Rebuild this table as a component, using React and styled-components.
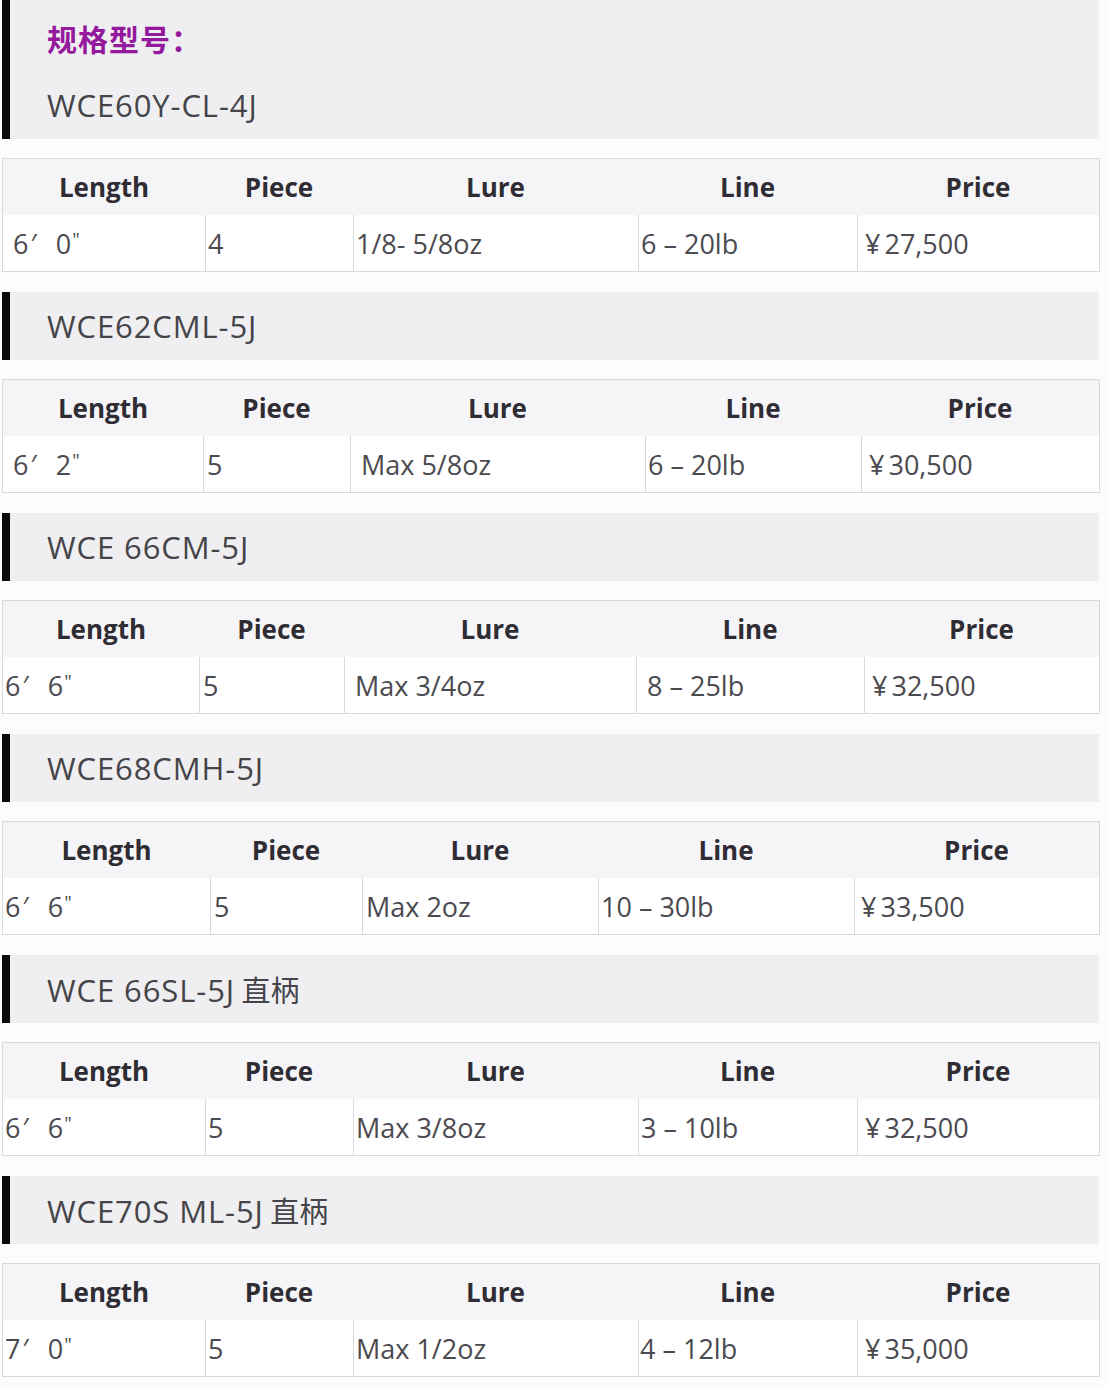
import styled, { createGlobalStyle } from 'styled-components';

const GlobalStyle = createGlobalStyle`
  body {
    margin: 0;
    background: #fcfcfd;
    font-family: "Open Sans", "Noto Sans", "Noto Sans CJK SC", sans-serif;
  }
`;

const Page = styled.div`
  width: 1108px;
  padding: 0 9px 0 2px;
  box-sizing: border-box;
  display: flex;
  flex-direction: column;
`;

const Heading = styled.div`
  background: #efeff1;
  border-left: 8px solid #0a0a0a;
  padding-left: 37px;
  margin-bottom: 19px;
  display: flex;
  flex-direction: column;
  padding-top: ${p => (p.$first ? '14px' : '0')};
`;

const Title = styled.div`
  color: #94199c;
  font-family: "Noto Sans CJK SC", sans-serif;
  font-weight: 700;
  font-size: 30px;
  line-height: 48px;
  height: 57px;
  letter-spacing: 1px;
`;

const Model = styled.div`
  color: #454449;
  font-size: 31px;
  line-height: 68px;
  height: 68px;
  letter-spacing: 0.9px;

  .cjk {
    font-family: "Noto Sans CJK SC", sans-serif;
    font-size: 29px;
    letter-spacing: 0;
  }
`;

const Table = styled.div`
  border: 1px solid #d9d9dc;
  margin-bottom: 20px;
  margin-right: -1px;
  background: #fff;
`;

const Row = styled.div`
  display: grid;
  grid-template-columns: ${p => p.$cols};
  height: 56px;
  background: ${p => (p.$head ? '#f5f5f7' : '#fff')};
`;

const HeadCell = styled.div`
  display: flex;
  align-items: center;
  justify-content: center;
  font-weight: 700;
  font-size: 26px;
  color: #2f2c33;
`;

const Cell = styled.div`
  display: flex;
  align-items: center;
  padding-left: ${p => p.$pad}px;
  font-size: 27px;
  color: #4b4a4f;
  white-space: pre;
  border-left: ${p => (p.$first ? 'none' : '1px solid #d9d9dc')};
`;

const Prime = styled.span`
  margin: 0 19px 0 2px;
`;

const Ditto = styled.span`
  font-size: 19px;
  align-self: flex-start;
  margin-top: 11px;
  margin-left: 1px;
`;

const Yen = styled.span`
  margin-right: 4px;
`;

const columns = ['Length', 'Piece', 'Lure', 'Line', 'Price'];

const rods = [
  {
    model: 'WCE60Y-CL-4J',
    cols: '202px 148px 285px 219px 1fr',
    pad: [10, 2, 2, 2, 7],
    feet: ['6', '0'],
    values: ['4', '1/8- 5/8oz', '6 – 20lb'],
    price: '27,500',
  },
  {
    model: 'WCE62CML-5J',
    cols: '200px 147px 295px 216px 1fr',
    pad: [10, 3, 10, 2, 7],
    feet: ['6', '2'],
    values: ['5', 'Max 5/8oz', '6 – 20lb'],
    price: '30,500',
  },
  {
    model: 'WCE 66CM-5J',
    cols: '196px 145px 292px 228px 1fr',
    pad: [2, 3, 10, 10, 7],
    feet: ['6', '6'],
    values: ['5', 'Max 3/4oz', '8 – 25lb'],
    price: '32,500',
  },
  {
    model: 'WCE68CMH-5J',
    cols: '207px 152px 236px 256px 1fr',
    pad: [2, 3, 3, 2, 6],
    feet: ['6', '6'],
    values: ['5', 'Max 2oz', '10 – 30lb'],
    price: '33,500',
  },
  {
    model: 'WCE 66SL-5J',
    cjk: '直柄',
    cols: '202px 148px 285px 219px 1fr',
    pad: [2, 2, 2, 2, 7],
    feet: ['6', '6'],
    values: ['5', 'Max 3/8oz', '3 – 10lb'],
    price: '32,500',
  },
  {
    model: 'WCE70S ML-5J',
    cjk: '直柄',
    cols: '202px 148px 285px 219px 1fr',
    pad: [2, 2, 2, 1, 7],
    feet: ['7', '0'],
    values: ['5', 'Max 1/2oz', '4 – 12lb'],
    price: '35,000',
  },
];

function RodSpec({ rod, first }) {
  return (
    <>
      <Heading $first={first}>
        {first && <Title>规格型号：</Title>}
        <Model>
          {rod.model}
          {rod.cjk && <span className="cjk"> {rod.cjk}</span>}
        </Model>
      </Heading>
      <Table>
        <Row $head $cols={rod.cols}>
          {columns.map(c => (
            <HeadCell key={c}>{c}</HeadCell>
          ))}
        </Row>
        <Row $cols={rod.cols}>
          <Cell $first $pad={rod.pad[0]}>
            {rod.feet[0]}
            <Prime>′</Prime>
            {rod.feet[1]}
            <Ditto>"</Ditto>
          </Cell>
          {rod.values.map((v, i) => (
            <Cell key={i} $pad={rod.pad[i + 1]}>{v}</Cell>
          ))}
          <Cell $pad={rod.pad[4]}>
            <Yen>¥</Yen>
            {rod.price}
          </Cell>
        </Row>
      </Table>
    </>
  );
}

export default function App() {
  return (
    <>
      <GlobalStyle />
      <Page>
        {rods.map((rod, i) => (
          <RodSpec key={rod.model} rod={rod} first={i === 0} />
        ))}
      </Page>
    </>
  );
}
